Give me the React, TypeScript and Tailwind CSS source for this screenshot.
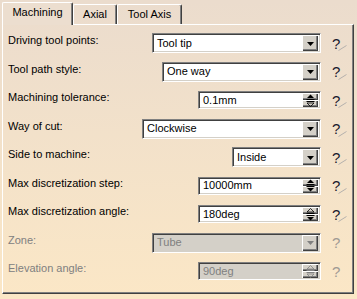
import React from "react";

const sunken =
  "border border-t-[#808080] border-l-[#808080] border-r-white border-b-white shadow-[inset_1px_1px_0_#404040,inset_-1px_-1px_0_#d4d0c8]";
const raised =
  "bg-[#d4d0c8] shadow-[inset_1px_1px_0_#ffffff,inset_-1px_-1px_0_#404040,inset_-2px_-2px_0_#808080]";

interface IComboProps {
  value: string;
  width: string;
  disabled?: boolean;
}

const Combo = (props: IComboProps) => {
  const { value, width, disabled } = props;
  return (
    <div
      className={`${width} h-[20px] flex items-center p-[2px] ${sunken} ${
        disabled ? "bg-[#d4d0c8] text-[#808080]" : "bg-white text-black"
      }`}
    >
      <div className="flex-1 pl-[2px] leading-none">{value}</div>
      <div className={`w-[16px] h-[16px] flex items-center justify-center ${raised}`}>
        <svg width="7" height="4" viewBox="0 0 7 4" className="mt-[1px]">
          <path d="M0 0H7L3.5 4Z" fill={disabled ? "#808080" : "#000"} />
        </svg>
      </div>
    </div>
  );
};

interface ISpinArrowProps {
  up: boolean;
  hollow?: boolean;
  color: string;
}

const SpinArrow = (props: ISpinArrowProps) => {
  const { up, hollow, color } = props;
  return (
    <svg width="9" height="6" viewBox="0 0 9 6">
      {up ? (
        <>
          <path
            d="M4.5 0.5L8 4H1Z"
            fill={hollow ? "none" : color}
            stroke={color}
            strokeWidth={hollow ? 0.8 : 0}
          />
          <path d="M0.5 5.5H8.5" stroke={color} strokeWidth="1" />
        </>
      ) : (
        <>
          <path d="M0.5 0.5H8.5" stroke={color} strokeWidth="1" />
          <path
            d="M1 2H8L4.5 5.5Z"
            fill={hollow ? "none" : color}
            stroke={color}
            strokeWidth={hollow ? 0.8 : 0}
          />
        </>
      )}
    </svg>
  );
};

interface ISpinnerProps {
  value: string;
  disabled?: boolean;
  hollowUp?: boolean;
  hollowDown?: boolean;
}

const Spinner = (props: ISpinnerProps) => {
  const { value, disabled, hollowUp, hollowDown } = props;
  const color = disabled ? "#808080" : "#000";
  return (
    <div
      className={`w-[123px] h-[18px] flex items-center p-[2px] ${sunken} ${
        disabled ? "bg-[#d4d0c8] text-[#808080]" : "bg-white text-black"
      }`}
    >
      <div className="flex-1 pl-[2px] leading-none">{value}</div>
      <div className="w-[16px] h-[14px] flex flex-col">
        <div className={`h-[7px] flex items-center justify-center ${raised}`}>
          <SpinArrow up color={color} hollow={hollowUp} />
        </div>
        <div className={`h-[7px] flex items-center justify-center ${raised}`}>
          <SpinArrow up={false} color={color} hollow={hollowDown} />
        </div>
      </div>
    </div>
  );
};

// help button: "?" with a faint pointer stroke
const Help = ({ disabled }: { disabled?: boolean }) => (
  <div className="w-[32px] h-full flex items-center pl-[11px] relative">
    <span
      className={`text-[15px] leading-none ${
        disabled ? "text-[#a09a94]" : "text-[#1a1a2e]"
      }`}
    >
      ?
    </span>
    {!disabled && (
      <svg width="9" height="6" viewBox="0 0 9 6" className="absolute left-[17px] top-[16px]">
        <path d="M0.5 5.5L8.5 0.5" stroke="#b4b0ac" strokeWidth="1" />
      </svg>
    )}
  </div>
);

interface IRowProps {
  label: string;
  disabled?: boolean;
  children: React.ReactNode;
}

const Row = (props: IRowProps) => {
  const { label, disabled, children } = props;
  return (
    <div className="h-[28.5px] flex items-center">
      <div
        className={`flex-1 pl-[5px] mb-[6px] whitespace-nowrap ${
          disabled ? "text-[#808080]" : "text-black"
        }`}
      >
        {label}
      </div>
      {children}
      <Help disabled={disabled} />
    </div>
  );
};

const Tab = ({ label, active }: { label: string; active?: boolean }) => (
  <div
    className={`flex items-center justify-center border-l border-t border-white rounded-tl-[2px] rounded-tr-[2px] shadow-[inset_-1px_0_0_#808080] border-r border-r-[#404040] ${
      active
        ? "h-[23px] -mb-px relative z-10 bg-[#ecdecf] pb-[3px]"
        : "h-[20px] pb-[1px]"
    }`}
  >
    {label}
  </div>
);

export default function App() {
  return (
    <div className="w-[357px] h-[299px] bg-linear-to-b from-[#ebdccd] to-[#fbe7c6] font-['Liberation_Sans',Arial,sans-serif] text-[11px] text-black pl-[2px] pt-[2px] overflow-hidden">
      <div className="flex items-end h-[22px]">
        <div className="w-[71px]">
          <Tab label="Machining" active />
        </div>
        <div className="w-[44px]">
          <Tab label="Axial" />
        </div>
        <div className="w-[65px]">
          <Tab label="Tool Axis" />
        </div>
      </div>
      <div className="w-[352px] h-[270px] border-l border-t border-white border-r border-b border-r-[#404040] border-b-[#404040] shadow-[inset_-1px_-1px_0_#808080] pt-[4px]">
        <Row label="Driving tool points:">
          <Combo value="Tool tip" width="w-[169px]" />
        </Row>
        <Row label="Tool path style:">
          <Combo value="One way" width="w-[159px]" />
        </Row>
        <Row label="Machining tolerance:">
          <Spinner value="0.1mm" hollowDown />
        </Row>
        <Row label="Way of cut:">
          <Combo value="Clockwise" width="w-[179px]" />
        </Row>
        <Row label="Side to machine:">
          <Combo value="Inside" width="w-[89px]" />
        </Row>
        <Row label="Max discretization step:">
          <Spinner value="10000mm" />
        </Row>
        <Row label="Max discretization angle:">
          <Spinner value="180deg" hollowUp />
        </Row>
        <Row label="Zone:" disabled>
          <Combo value="Tube" width="w-[169px]" disabled />
        </Row>
        <Row label="Elevation angle:" disabled>
          <Spinner value="90deg" disabled hollowUp hollowDown />
        </Row>
      </div>
    </div>
  );
}
